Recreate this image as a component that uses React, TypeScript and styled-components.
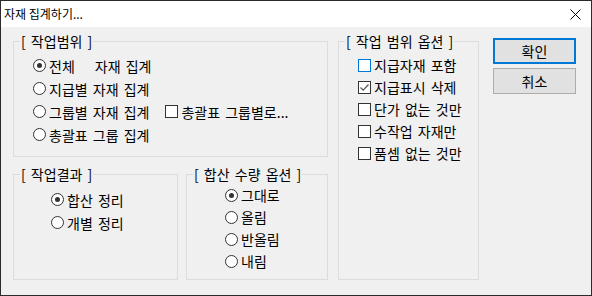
import React from 'react';
import styled, { createGlobalStyle, css } from 'styled-components';

const GlobalStyle = createGlobalStyle`
	* {
		box-sizing: border-box;
	}
	body {
		margin: 0;
		background: #f0f0f0;
		font-family: 'Noto Sans CJK KR', 'Noto Sans', sans-serif;
	}
`;

const Window = styled.div`
	width: 592px;
	height: 296px;
	border: 1px solid #2b2b2b;
	background: #f0f0f0;
	display: flex;
	flex-direction: column;
	color: #000;
`;

const TitleBar = styled.div`
	height: 26px;
	background: #fff;
	display: flex;
	align-items: center;
	justify-content: space-between;
	padding: 0 10px 0 3px;
	font-size: 12px;
	line-height: 16px;
`;

const CloseIcon = () => (
	<svg width='11' height='11' viewBox='0 0 11 11'>
		<path d='M0.5 0.5 L10.5 10.5 M10.5 0.5 L0.5 10.5' stroke='#000' strokeWidth='1' />
	</svg>
);

const Body = styled.div`
	flex: 1;
	display: flex;
	align-items: flex-start;
	padding: 6px 0 0 12px;
	font-size: 14px;
	line-height: 16px;
	word-spacing: 2px;
`;

const LeftColumn = styled.div`
	display: flex;
	flex-direction: column;
	gap: 9px;
`;

const BottomRow = styled.div`
	display: flex;
	gap: 8px;
`;

const Group = styled.fieldset<{ $w: number; $h: number }>`
	margin: 0;
	min-width: 0;
	width: ${(p) => p.$w}px;
	height: ${(p) => p.$h}px;
	border: 1px solid #dcdcdc;
	padding: 0;
`;

const Legend = styled.legend`
	margin-left: 6px;
	padding: 0 1px;
	font-size: 14px;
	line-height: 16px;
	white-space: pre;
`;

const GroupBody = styled.div<{ $pl: number; $pt: number; $row: number }>`
	display: flex;
	flex-direction: column;
	padding: ${(p) => p.$pt}px 0 0 ${(p) => p.$pl}px;
	& > div {
		height: ${(p) => p.$row}px;
	}
`;

const Row = styled.div`
	display: flex;
	align-items: center;
	white-space: pre;
`;

const Item = styled.span<{ $ml?: number }>`
	display: inline-flex;
	align-items: center;
	gap: 3px;
	margin-left: ${(p) => p.$ml ?? 0}px;
`;

const Radio = styled.span<{ $on?: boolean }>`
	width: 13px;
	height: 13px;
	border: 1px solid #333;
	border-radius: 50%;
	background: #fff;
	position: relative;
	flex: none;
	${(p) =>
		p.$on &&
		css`
			&::after {
				content: '';
				position: absolute;
				left: 3px;
				top: 3px;
				width: 5px;
				height: 5px;
				border-radius: 50%;
				background: #333;
			}
		`}
`;

const Box = styled.span<{ $focus?: boolean }>`
	width: 13px;
	height: 13px;
	border: 1px solid ${(p) => (p.$focus ? '#0078d7' : '#333')};
	background: #fff;
	flex: none;
	display: flex;
	align-items: center;
	justify-content: center;
`;

const Gap = styled.span<{ $w: number }>`
	display: inline-block;
	width: ${(p) => p.$w}px;
`;

const RadioItem = ({ on, children, ml }: { on?: boolean; children: React.ReactNode; ml?: number }) => (
	<Item $ml={ml}>
		<Radio $on={on} />
		<span>{children}</span>
	</Item>
);

const CheckItem = ({
	on,
	focus,
	children,
	ml,
}: {
	on?: boolean;
	focus?: boolean;
	children: React.ReactNode;
	ml?: number;
}) => (
	<Item $ml={ml}>
		<Box $focus={focus}>
			{on && (
				<svg width='11' height='11' viewBox='0 0 11 11'>
					<path d='M1.5 5.5 L4.2 8.2 L9.5 2.5' stroke='#555' strokeWidth='1.2' fill='none' />
				</svg>
			)}
		</Box>
		<span>{children}</span>
	</Item>
);

const Buttons = styled.div`
	margin: 5px 0 0 14px;
	display: flex;
	flex-direction: column;
	gap: 4px;
`;

const Button = styled.button<{ $primary?: boolean }>`
	width: 83px;
	height: 26px;
	margin: 0;
	padding: 0;
	background: #e1e1e1;
	border: ${(p) => (p.$primary ? '2px solid #0078d7' : '1px solid #adadad')};
	font-family: inherit;
	font-size: 14px;
	line-height: 16px;
	color: #000;
`;

const App: React.FC = () => {
	return (
		<>
			<GlobalStyle />
			<Window>
				<TitleBar>
					<span>자재 집계하기...</span>
					<CloseIcon />
				</TitleBar>
				<Body>
					<LeftColumn>
						<Group $w={315} $h={124}>
							<Legend>[ 작업범위 ]</Legend>
							<GroupBody $pl={19} $pt={5} $row={23}>
								<Row>
									<RadioItem on>
										전체
										<Gap $w={20} />
										자재 집계
									</RadioItem>
								</Row>
								<Row>
									<RadioItem>지급별 자재 집계</RadioItem>
								</Row>
								<Row>
									<RadioItem>그룹별 자재 집계</RadioItem>
									<CheckItem ml={16}>총괄표 그룹별로...</CheckItem>
								</Row>
								<Row>
									<RadioItem>총괄표 그룹 집계</RadioItem>
								</Row>
							</GroupBody>
						</Group>
						<BottomRow>
							<Group $w={165} $h={114}>
								<Legend>[ 작업결과 ]</Legend>
								<GroupBody $pl={37} $pt={6} $row={23}>
									<Row>
										<RadioItem on>합산 정리</RadioItem>
									</Row>
									<Row>
										<RadioItem>개별 정리</RadioItem>
									</Row>
								</GroupBody>
							</Group>
							<Group $w={142} $h={114}>
								<Legend>[ 합산 수량 옵션 ]</Legend>
								<GroupBody $pl={38} $pt={2} $row={22}>
									<Row>
										<RadioItem on>그대로</RadioItem>
									</Row>
									<Row>
										<RadioItem>올림</RadioItem>
									</Row>
									<Row>
										<RadioItem>반올림</RadioItem>
									</Row>
									<Row>
										<RadioItem>내림</RadioItem>
									</Row>
								</GroupBody>
							</Group>
						</BottomRow>
					</LeftColumn>
					<Group $w={141} $h={247} style={{ marginLeft: 10 }}>
						<Legend>[ 작업 범위 옵션 ]</Legend>
						<GroupBody $pl={19} $pt={5} $row={22}>
							<Row>
								<CheckItem focus>지급자재 포함</CheckItem>
							</Row>
							<Row>
								<CheckItem on>지급표시 삭제</CheckItem>
							</Row>
							<Row>
								<CheckItem>단가 없는 것만</CheckItem>
							</Row>
							<Row>
								<CheckItem>수작업 자재만</CheckItem>
							</Row>
							<Row>
								<CheckItem>품셈 없는 것만</CheckItem>
							</Row>
						</GroupBody>
					</Group>
					<Buttons>
						<Button $primary>확인</Button>
						<Button>취소</Button>
					</Buttons>
				</Body>
			</Window>
		</>
	);
};

export default App;
